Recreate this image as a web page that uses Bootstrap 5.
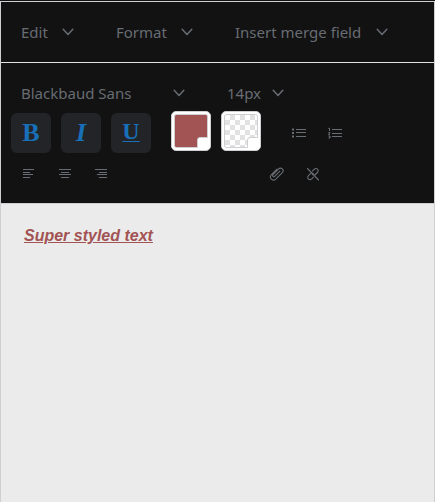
<!DOCTYPE html>
<html lang="en">
<head>
<meta charset="utf-8">
<meta name="viewport" content="width=device-width, initial-scale=1">
<title>Text editor</title>
<link href="https://cdn.jsdelivr.net/npm/bootstrap@5.3.0/dist/css/bootstrap.min.css" rel="stylesheet">
<style>
body { background: #121212; font-family: "Noto Sans", sans-serif; }
.editor { border: 1px solid #cdcfd2; border-bottom: 0; margin-top: 1px; }
.editor-bars { color: #686c73; font-size: 15px; line-height: 20px; }
.menu-row { height: 61px; padding: 0 20px; gap: 42px; border-bottom: 1px solid #e2e3e5; }
.tools { height: 140px; padding: 10px 10px 0; }
.drop { gap: 12px; color: inherit; font-size: 15px; white-space: nowrap; }
.drop svg { width: 12px; height: 12px; }
.drop-edit span { width: 29px; }
.drop-format span { width: 53px; }
.drop-merge span { width: 129px; }
.drop-font { width: 164px; }
.drop-size span { width: 33px; }
.font-row { height: 40px; padding: 0 10px; gap: 42px; }
.tool-row { height: 40px; }
.tool-group { gap: 10px; }
.swatches { height: 36px; align-items: center; }
.style-btn { width: 40px; height: 40px; border-radius: 6px; background: #232428; color: #1870b8; font: bold 26px/36px "Liberation Serif", serif; }
.style-btn.under { padding-bottom: 4px !important; font-size: 24px; text-decoration: underline; text-decoration-thickness: 1px; text-underline-offset: 2px; }
.swatch { width: 40px; height: 40px; }
.icon-btn { width: 36px; height: 40px; color: inherit; }
.link-tools { margin-left: 140px; }
.align-row { height: 42px; }
.page-area { background: #ebebeb; border-top: 1px solid #cdcfd2; min-height: calc(100vh - 203px); padding: 22px 23px; color: #a25353; font: italic bold 16px/19px "Liberation Sans", sans-serif; text-decoration: underline; }
</style>
<script src="https://cdn.jsdelivr.net/npm/bootstrap@5.3.0/dist/js/bootstrap.bundle.min.js"></script>
</head>
<body>
<svg class="d-none" aria-hidden="true"><symbol id="chevron" viewBox="0 0 12 12"><path d="M1.2 3.2 6 8.500l4.800-5.300" fill="none" stroke="currentColor" stroke-width="1.500" stroke-linecap="round" stroke-linejoin="round"/></symbol></svg>
<main class="editor">
  <div class="editor-bars">
    <div class="menu-row d-flex align-items-center">
      <button type="button" class="drop drop-edit btn border-0 p-0 d-flex align-items-center lh-sm"><span class="text-start">Edit</span><svg aria-hidden="true"><use href="#chevron"/></svg></button>
      <button type="button" class="drop drop-format btn border-0 p-0 d-flex align-items-center lh-sm"><span class="text-start">Format</span><svg aria-hidden="true"><use href="#chevron"/></svg></button>
      <button type="button" class="drop drop-merge btn border-0 p-0 d-flex align-items-center lh-sm"><span class="text-start">Insert merge field</span><svg aria-hidden="true"><use href="#chevron"/></svg></button>
    </div>
    <div class="tools" role="toolbar" aria-label="Text formatting">
      <div class="font-row d-flex align-items-center">
        <button type="button" class="drop drop-font btn border-0 p-0 d-flex align-items-center justify-content-between lh-sm"><span>Blackbaud Sans</span><svg aria-hidden="true"><use href="#chevron"/></svg></button>
        <button type="button" class="drop drop-size btn border-0 p-0 d-flex align-items-center lh-sm"><span class="text-start">14px</span><svg aria-hidden="true"><use href="#chevron"/></svg></button>
      </div>
      <div class="tool-row d-flex">
        <div class="tool-group d-flex">
          <button type="button" class="style-btn btn border-0 p-0" aria-label="Bold">B</button>
          <button type="button" class="style-btn btn border-0 p-0 fst-italic" aria-label="Italic">I</button>
          <button type="button" class="style-btn under btn border-0 p-0" aria-label="Underline">U</button>
        </div>
        <div class="tool-group swatches d-flex ms-3 ps-1">
          <button type="button" class="swatch btn border-0 p-0 d-flex" aria-label="Font color">
            <svg width="40" height="40" viewBox="0 0 40 40"><rect x=".5" y=".5" width="39" height="39" rx="4.500" fill="#fff" stroke="#cdcfd2"/><path d="M5.500 3.500h29a2 2 0 0 1 2 2V26.500H29a2.500 2.500 0 0 0-2.500 2.500v7.500h-21a2 2 0 0 1-2-2v-29a2 2 0 0 1 2-2z" fill="#a25353" stroke="#cdcfd2"/></svg>
          </button>
          <button type="button" class="swatch btn border-0 p-0 d-flex" aria-label="Background color">
            <svg width="40" height="40" viewBox="0 0 40 40"><defs><pattern id="checks" x="4" y="4" width="10" height="10" patternUnits="userSpaceOnUse"><rect width="10" height="10" fill="#fff"/><path d="M5 0h5v5H5zM0 5h5v5H0z" fill="#e2e2e2"/></pattern></defs><rect x=".5" y=".5" width="39" height="39" rx="4.500" fill="#fff" stroke="#cdcfd2"/><path d="M5.500 3.500h29a2 2 0 0 1 2 2V26.500H29a2.500 2.500 0 0 0-2.500 2.500v7.500h-21a2 2 0 0 1-2-2v-29a2 2 0 0 1 2-2z" fill="url(#checks)" stroke="#cdcfd2"/></svg>
          </button>
        </div>
        <div class="d-flex ms-3 ps-1">
          <button type="button" class="icon-btn btn border-0 p-0 d-flex align-items-center justify-content-center" aria-label="Bulleted list">
            <svg width="14" height="14" viewBox="0 0 14 14"><path d="M4 3.500h10M4 6.500h10M4 10.500h10" stroke="currentColor"/><path d="M0 2.500h2v2H0zM0 6h2v2H0zM0 9.500h2v2H0z" fill="currentColor"/></svg>
          </button>
          <button type="button" class="icon-btn btn border-0 p-0 d-flex align-items-center justify-content-center" aria-label="Numbered list">
            <svg width="14" height="14" viewBox="0 0 14 14"><path d="M4 3.500h10M4 7.500h10M4 10.500h10M.5 2.500l1-.5v3M.5 6.500h1.500L.5 8.500h1.500M.5 10h1.500v2H.5M1 11h1" fill="none" stroke="currentColor"/></svg>
          </button>
        </div>
      </div>
      <div class="align-row d-flex align-items-center">
        <button type="button" class="icon-btn btn border-0 p-0 d-flex align-items-center justify-content-center" aria-label="Align left">
          <svg width="12" height="12" viewBox="0 0 12 12"><path d="M0 1.500h11M0 4.500h7M0 6.500h10M0 9.500h7" stroke="currentColor"/></svg>
        </button>
        <button type="button" class="icon-btn btn border-0 p-0 d-flex align-items-center justify-content-center" aria-label="Align center">
          <svg width="12" height="12" viewBox="0 0 12 12"><path d="M0 1.500h12M2 4.500h8M0 6.500h12M2 9.500h8" stroke="currentColor"/></svg>
        </button>
        <button type="button" class="icon-btn btn border-0 p-0 d-flex align-items-center justify-content-center" aria-label="Align right">
          <svg width="12" height="12" viewBox="0 0 12 12"><path d="M0 1.500h12M4 4.500h8M2 6.500h10M4 9.500h8" stroke="currentColor"/></svg>
        </button>
        <div class="link-tools d-flex">
          <button type="button" class="icon-btn btn border-0 p-0 d-flex align-items-center justify-content-center" aria-label="Insert link">
            <svg width="16" height="16" viewBox="0 0 16 16"><path d="M10.800 5.200 5.700 10.300c-.5.500-1.300.5-1.700 0-.5-.5-.5-1.200 0-1.700l5.600-5.700c1-1 2.700-1 3.700 0s1 2.700 0 3.700l-6.500 6.500c-1.300 1.200-3.200 1.200-4.400 0s-1.200-3.100 0-4.400l5.600-5.600" fill="none" stroke="currentColor" stroke-width="1.100" stroke-linecap="round"/></svg>
          </button>
          <button type="button" class="icon-btn btn border-0 p-0 d-flex align-items-center justify-content-center" aria-label="Remove link">
            <svg width="14" height="14" viewBox="0 0 14 14"><path d="M1.500 1.500l11 11.500M6.500 4l1.700-1.700c1-1 2.400-1 3.300-.1s.9 2.300-.1 3.300l-2 2c-.8.800-2 .9-2.900.1M7.400 10.200l-1.700 1.700c-1 1-2.400 1-3.300.1s-.9-2.300.1-3.300l2-2c.8-.8 2-.9 2.900-.1" fill="none" stroke="currentColor" stroke-width="1.100" stroke-linecap="round"/></svg>
          </button>
        </div>
      </div>
    </div>
  </div>
  <div class="page-area" contenteditable="true" role="textbox" aria-label="Document text">Super styled text</div>
</main>
</body>
</html>
